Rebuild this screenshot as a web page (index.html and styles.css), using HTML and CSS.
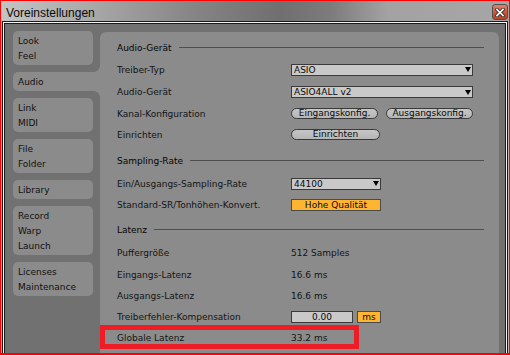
FILE: index.html
```html
<!DOCTYPE html>
<html lang="de">
<head>
    <meta charset="UTF-8">
    <title>Voreinstellungen</title>
    <link rel="stylesheet" href="styles.css">
</head>
<body>
    <div class="window">
        <div class="titlebar">
            <span class="title">Voreinstellungen</span>
            <span class="close">
                <svg width="10" height="9" viewBox="0 0 10 9">
                    <path d="M2 1.5 L8 7.5 M8 1.5 L2 7.5" stroke="#3a3a3a" stroke-width="3.6" stroke-linecap="square"/>
                    <path d="M2 1.5 L8 7.5 M8 1.5 L2 7.5" stroke="#fff" stroke-width="1.6" stroke-linecap="square"/>
                </svg>
            </span>
        </div>
        <div class="frame">
            <div class="client">
                <div class="content">
                    <ul class="tabs">
                        <li>Look<br>Feel</li>
                        <li class="current">Audio</li>
                        <li>Link<br>MIDI</li>
                        <li>File<br>Folder</li>
                        <li>Library</li>
                        <li>Record<br>Warp<br>Launch</li>
                        <li>Licenses<br>Maintenance</li>
                    </ul>
                    <div class="panel">
                        <div class="section">Audio-Gerät</div>
                        <div class="row h23">
                            <span>Treiber-Typ</span>
                            <div class="select wide">ASIO<i class="arrow"></i></div>
                        </div>
                        <div class="row h22">
                            <span>Audio-Gerät</span>
                            <div class="select wide">ASIO4ALL v2<i class="arrow"></i></div>
                        </div>
                        <div class="row">
                            <span>Kanal-Konfiguration</span>
                            <div class="buttons">
                                <span class="pill">Eingangskonfig.</span>
                                <span class="pill">Ausgangskonfig.</span>
                            </div>
                        </div>
                        <div class="row">
                            <span>Einrichten</span>
                            <div class="buttons">
                                <span class="pill long">Einrichten</span>
                            </div>
                        </div>

                        <div class="section gap4">Sampling-Rate</div>
                        <div class="row h23">
                            <span>Ein/Ausgangs-Sampling-Rate</span>
                            <div class="select short">44100<i class="arrow"></i></div>
                        </div>
                        <div class="row h20">
                            <span>Standard-SR/Tonhöhen-Konvert.</span>
                            <div class="toggle short">Hohe Qualität</div>
                        </div>

                        <div class="section gap3">Latenz</div>
                        <div class="row h23">
                            <span>Puffergröße</span>
                            <span>512 Samples</span>
                        </div>
                        <div class="row">
                            <span>Eingangs-Latenz</span>
                            <span>16.6 ms</span>
                        </div>
                        <div class="row">
                            <span>Ausgangs-Latenz</span>
                            <span>16.6 ms</span>
                        </div>
                        <div class="row">
                            <span>Treiberfehler-Kompensation</span>
                            <div class="buttons">
                                <span class="field">0.00</span>
                                <span class="toggle unit">ms</span>
                            </div>
                        </div>
                        <div class="row marked">
                            <span>Globale Latenz</span>
                            <span>33.2 ms</span>
                        </div>
                    </div>
                </div>
            </div>
        </div>
    </div>
</body>
</html>
```

FILE: styles.css
```css
*, *::before, *::after {
    margin: 0;
    padding: 0;
    box-sizing: border-box;
}
body {
    width: 510px;
    height: 355px;
    overflow: hidden;
    font: 9px "DejaVu Sans", sans-serif;
    color: #141414;
}
.window {
    width: 510px;
    height: 355px;
    border: 1px solid #ff0000;
    border-bottom-width: 2px;
    background: #b4b4b4;
    display: flex;
    flex-direction: column;
}
.titlebar {
    height: 20px;
    flex: none;
    display: flex;
    align-items: flex-start;
    padding-left: 5px;
    background: linear-gradient(to right, #c4c4c4 0%, #a8a8a8 18%, #858585 38%, #6f6f6f 55%, #7c7c7c 65%, #a2a2a2 76%, #a6a6a6 100%);
}
.title {
    font: 12px "Liberation Sans", Arial, sans-serif;
    color: #0a0a0a;
    line-height: 14px;
    margin-top: 5px;
}
.close {
    margin-left: auto;
    margin-right: 1px;
    margin-top: 3px;
    width: 16px;
    height: 16px;
    border: 1px solid #505050;
    border-radius: 3px;
    background: linear-gradient(#e38468, #d0583b 50%, #bb4226);
    display: flex;
    align-items: center;
    justify-content: center;
}
.frame {
    flex: 1;
    display: flex;
    margin: 0 1px;
    border: 1px solid #1a1a1a;
    border-bottom: 0;
}
.client {
    flex: 1;
    display: flex;
    border: 1px solid #f4f4f4;
    border-bottom: 0;
}
.content {
    flex: 1;
    display: flex;
    border: 1px solid #1a1a1a;
    border-bottom: 0;
    background: #717171;
    padding: 7px 6px 0 8px;
}

/* linke Reiter */
.tabs {
    list-style: none;
    width: 87px;
    flex: none;
    display: flex;
    flex-direction: column;
    gap: 7px;
}
.tabs li {
    width: 80px;
    padding: 3px 5px 1px;
    line-height: 15px;
    background: #8b8b8b;
    border-radius: 5px;
    color: #111;
}
.tabs .current {
    width: 87px;
    border-radius: 5px 0 0 5px;
    position: relative;
}
.tabs .current::before,
.tabs .current::after {
    content: "";
    position: absolute;
    right: 0;
    width: 6px;
    height: 6px;
}
.tabs .current::before {
    top: -6px;
    background: radial-gradient(circle at 0 0, transparent 5.5px, #8b8b8b 6px);
}
.tabs .current::after {
    bottom: -6px;
    background: radial-gradient(circle at 0 100%, transparent 5.5px, #8b8b8b 6px);
}

/* rechte Seite */
.panel {
    flex: 1;
    margin-top: 1px;
    background: #8b8b8b;
    border-radius: 6px 6px 0 0;
    padding: 5px 15px 0 17px;
}
.section {
    height: 21px;
    display: flex;
    align-items: center;
    color: #050505;
}
.section::after {
    content: "";
    flex: 1;
    height: 1px;
    margin-left: 7px;
    background: #4f4f4f;
}
.section.gap4 {
    margin-top: 4px;
    height: 23px;
}
.section.gap3 {
    margin-top: 3px;
    height: 23px;
}
.row {
    display: grid;
    grid-template-columns: 174px auto;
    align-items: center;
    height: 21px;
}
.row.h23 { height: 23px; }
.row.h22 { height: 22px; }
.row.h20 { height: 20px; }

.select {
    height: 12px;
    border: 1px solid #3a3a3a;
    background: #c9c9c9;
    display: flex;
    align-items: center;
    padding-left: 2px;
    line-height: 10px;
    color: #0a0a0a;
}
.wide { width: 182px; }
.short { width: 90px; }
.arrow {
    margin-left: auto;
    margin-right: 1px;
    width: 0;
    height: 0;
    border-left: 3.5px solid transparent;
    border-right: 3.5px solid transparent;
    border-top: 5px solid #000;
}
.buttons {
    display: flex;
    gap: 8px;
    align-items: center;
}
.pill {
    width: 87px;
    height: 11px;
    border: 1px solid #3a3a3a;
    border-radius: 6px;
    background: linear-gradient(#c6c6c6, #b6b6b6);
    text-align: center;
    line-height: 9px;
    color: #0a0a0a;
}
.pill.long { width: 89px; }
.toggle {
    height: 12px;
    border: 1px solid #4a4a4a;
    background: #ffb532;
    text-align: center;
    line-height: 10px;
    color: #0a0a0a;
}
.field {
    width: 62px;
    height: 12px;
    border: 1px solid #3a3a3a;
    background: #c9c9c9;
    text-align: center;
    line-height: 10px;
    color: #0a0a0a;
}
.buttons .unit {
    width: 24px;
    margin-left: -4px;
}
.marked {
    position: relative;
}
.marked::after {
    content: "";
    position: absolute;
    left: -17px;
    top: -2px;
    width: 259px;
    height: 24px;
    border: 5px solid #ee1c24;
}
```
